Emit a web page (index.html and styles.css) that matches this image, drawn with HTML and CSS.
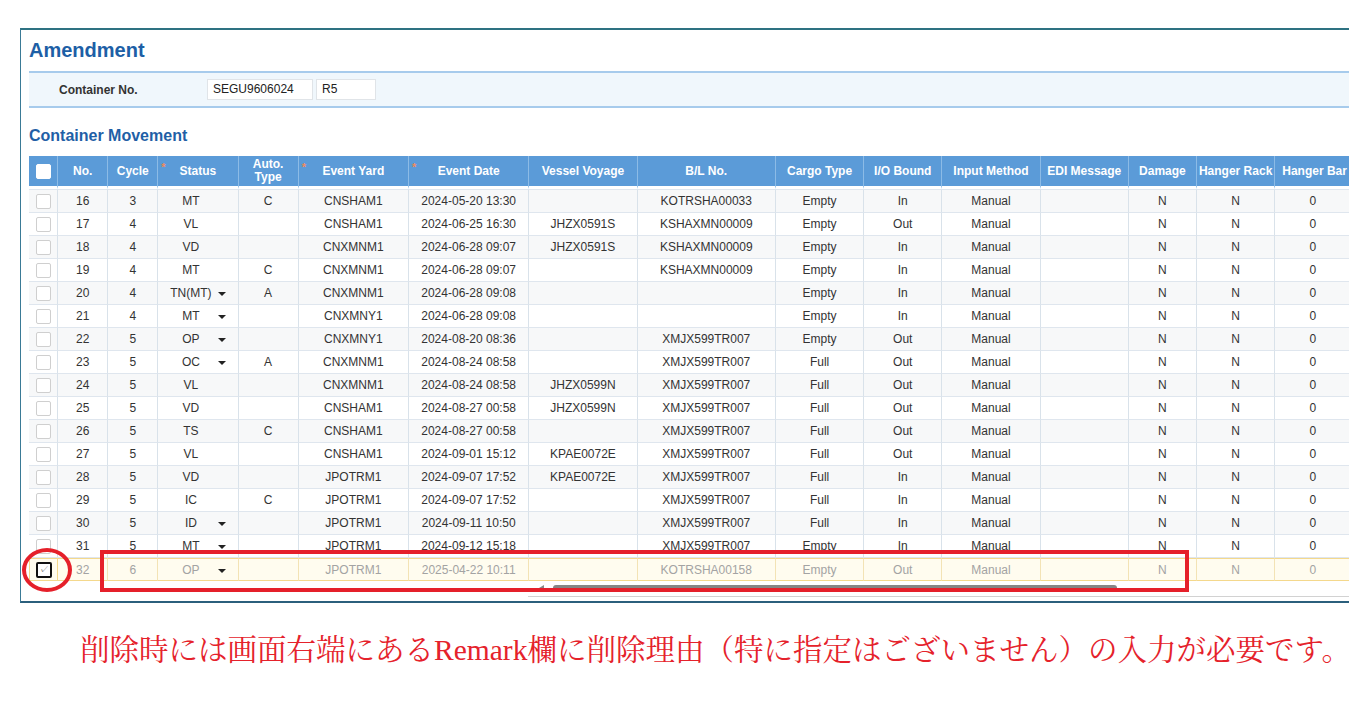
FILE: index.html
```html
<!DOCTYPE html>
<html lang="ja">
<head>
    <meta charset="UTF-8">
    <meta name="viewport" content="width=device-width, initial-scale=1.0">
    <title>Amendment</title>
    <link rel="stylesheet" href="styles.css">
</head>
<body>
    <div class="panel">
        <h1 class="title">Amendment</h1>
        <div class="search-band">
            <label class="search-label">Container No.</label>
            <span class="field field-no">SEGU9606024</span>
            <span class="field field-type">R5</span>
        </div>

        <h2 class="section">Container Movement</h2>

        <table class="grid">
            <colgroup>
                <col style="width:29px"><col style="width:50px"><col style="width:50px"><col style="width:80px">
                <col style="width:60px"><col style="width:110px"><col style="width:120px"><col style="width:108px">
                <col style="width:138px"><col style="width:88px"><col style="width:78px"><col style="width:98px">
                <col style="width:88px"><col style="width:68px"><col style="width:78px"><col style="width:76px">
                <col style="width:160px">
            </colgroup>
            <thead>
                <tr>
                    <th><span class="chk chk-head"></span></th>
                    <th>No.</th>
                    <th>Cycle</th>
                    <th class="req">Status</th>
                    <th class="two">Auto.<br>Type</th>
                    <th class="req">Event Yard</th>
                    <th class="req">Event Date</th>
                    <th>Vessel Voyage</th>
                    <th>B/L No.</th>
                    <th>Cargo Type</th>
                    <th>I/O Bound</th>
                    <th>Input Method</th>
                    <th>EDI Message</th>
                    <th>Damage</th>
                    <th>Hanger Rack</th>
                    <th class="last">Hanger Bar</th>
                    <th></th>
                </tr>
            </thead>
            <tbody>
                <tr class="alt"><td><span class="chk"></span></td><td>16</td><td>3</td><td class="status">MT</td><td>C</td><td>CNSHAM1</td><td>2024-05-20 13:30</td><td></td><td>KOTRSHA00033</td><td>Empty</td><td>In</td><td>Manual</td><td></td><td>N</td><td>N</td><td>0</td><td></td></tr>
                <tr><td><span class="chk"></span></td><td>17</td><td>4</td><td class="status">VL</td><td></td><td>CNSHAM1</td><td>2024-06-25 16:30</td><td>JHZX0591S</td><td>KSHAXMN00009</td><td>Empty</td><td>Out</td><td>Manual</td><td></td><td>N</td><td>N</td><td>0</td><td></td></tr>
                <tr class="alt"><td><span class="chk"></span></td><td>18</td><td>4</td><td class="status">VD</td><td></td><td>CNXMNM1</td><td>2024-06-28 09:07</td><td>JHZX0591S</td><td>KSHAXMN00009</td><td>Empty</td><td>In</td><td>Manual</td><td></td><td>N</td><td>N</td><td>0</td><td></td></tr>
                <tr><td><span class="chk"></span></td><td>19</td><td>4</td><td class="status">MT</td><td>C</td><td>CNXMNM1</td><td>2024-06-28 09:07</td><td></td><td>KSHAXMN00009</td><td>Empty</td><td>In</td><td>Manual</td><td></td><td>N</td><td>N</td><td>0</td><td></td></tr>
                <tr class="alt"><td><span class="chk"></span></td><td>20</td><td>4</td><td class="status">TN(MT)<span class="caret"></span></td><td>A</td><td>CNXMNM1</td><td>2024-06-28 09:08</td><td></td><td></td><td>Empty</td><td>In</td><td>Manual</td><td></td><td>N</td><td>N</td><td>0</td><td></td></tr>
                <tr><td><span class="chk"></span></td><td>21</td><td>4</td><td class="status">MT<span class="caret"></span></td><td></td><td>CNXMNY1</td><td>2024-06-28 09:08</td><td></td><td></td><td>Empty</td><td>In</td><td>Manual</td><td></td><td>N</td><td>N</td><td>0</td><td></td></tr>
                <tr class="alt"><td><span class="chk"></span></td><td>22</td><td>5</td><td class="status">OP<span class="caret"></span></td><td></td><td>CNXMNY1</td><td>2024-08-20 08:36</td><td></td><td>XMJX599TR007</td><td>Empty</td><td>Out</td><td>Manual</td><td></td><td>N</td><td>N</td><td>0</td><td></td></tr>
                <tr><td><span class="chk"></span></td><td>23</td><td>5</td><td class="status">OC<span class="caret"></span></td><td>A</td><td>CNXMNM1</td><td>2024-08-24 08:58</td><td></td><td>XMJX599TR007</td><td>Full</td><td>Out</td><td>Manual</td><td></td><td>N</td><td>N</td><td>0</td><td></td></tr>
                <tr class="alt"><td><span class="chk"></span></td><td>24</td><td>5</td><td class="status">VL</td><td></td><td>CNXMNM1</td><td>2024-08-24 08:58</td><td>JHZX0599N</td><td>XMJX599TR007</td><td>Full</td><td>Out</td><td>Manual</td><td></td><td>N</td><td>N</td><td>0</td><td></td></tr>
                <tr><td><span class="chk"></span></td><td>25</td><td>5</td><td class="status">VD</td><td></td><td>CNSHAM1</td><td>2024-08-27 00:58</td><td>JHZX0599N</td><td>XMJX599TR007</td><td>Full</td><td>Out</td><td>Manual</td><td></td><td>N</td><td>N</td><td>0</td><td></td></tr>
                <tr class="alt"><td><span class="chk"></span></td><td>26</td><td>5</td><td class="status">TS</td><td>C</td><td>CNSHAM1</td><td>2024-08-27 00:58</td><td></td><td>XMJX599TR007</td><td>Full</td><td>Out</td><td>Manual</td><td></td><td>N</td><td>N</td><td>0</td><td></td></tr>
                <tr><td><span class="chk"></span></td><td>27</td><td>5</td><td class="status">VL</td><td></td><td>CNSHAM1</td><td>2024-09-01 15:12</td><td>KPAE0072E</td><td>XMJX599TR007</td><td>Full</td><td>Out</td><td>Manual</td><td></td><td>N</td><td>N</td><td>0</td><td></td></tr>
                <tr class="alt"><td><span class="chk"></span></td><td>28</td><td>5</td><td class="status">VD</td><td></td><td>JPOTRM1</td><td>2024-09-07 17:52</td><td>KPAE0072E</td><td>XMJX599TR007</td><td>Full</td><td>In</td><td>Manual</td><td></td><td>N</td><td>N</td><td>0</td><td></td></tr>
                <tr><td><span class="chk"></span></td><td>29</td><td>5</td><td class="status">IC</td><td>C</td><td>JPOTRM1</td><td>2024-09-07 17:52</td><td></td><td>XMJX599TR007</td><td>Full</td><td>In</td><td>Manual</td><td></td><td>N</td><td>N</td><td>0</td><td></td></tr>
                <tr class="alt"><td><span class="chk"></span></td><td>30</td><td>5</td><td class="status">ID<span class="caret"></span></td><td></td><td>JPOTRM1</td><td>2024-09-11 10:50</td><td></td><td>XMJX599TR007</td><td>Full</td><td>In</td><td>Manual</td><td></td><td>N</td><td>N</td><td>0</td><td></td></tr>
                <tr><td><span class="chk"></span></td><td>31</td><td>5</td><td class="status">MT<span class="caret"></span></td><td></td><td>JPOTRM1</td><td>2024-09-12 15:18</td><td></td><td>XMJX599TR007</td><td>Empty</td><td>In</td><td>Manual</td><td></td><td>N</td><td>N</td><td>0</td><td></td></tr>
                <tr class="sel"><td><span class="chk chk-on">&#10003;</span></td><td>32</td><td>6</td><td class="status">OP<span class="caret"></span></td><td></td><td>JPOTRM1</td><td>2025-04-22 10:11</td><td></td><td>KOTRSHA00158</td><td>Empty</td><td>Out</td><td>Manual</td><td></td><td>N</td><td>N</td><td>0</td><td></td></tr>
            </tbody>
        </table>

        <div class="hscroll">
            <span class="arrow"></span>
            <div class="thumb"></div>
        </div>
    </div>

    <p class="note">削除時には画面右端にあるRemark欄に削除理由（特に指定はございません）の入力が必要です。</p>

    <!-- red marks from the manual -->
    <div class="mark-circle"></div>
    <div class="mark-box"></div>
</body>
</html>
```

FILE: styles.css
```css
* { margin: 0; padding: 0; box-sizing: border-box; }
html, body { overflow: hidden; }
body {
    font-family: 'Liberation Sans', Arial, sans-serif;
    font-size: 12px;
    color: #333;
    background: #fff;
    width: 1349px;
    height: 705px;
    position: relative;
}

.panel {
    margin: 28px 0 0 20px;
    width: 1520px;
    height: 575px;
    border-top: 2px solid #2e7282;
    border-left: 1px solid #3a7a96;
    border-bottom: 2px solid #2b5f7c;
}
.title {
    font-size: 20px;
    font-weight: bold;
    color: #1d5fa6;
    line-height: 41px;
    padding-left: 8px;
}
.search-band {
    margin-left: 8px;
    height: 37px;
    background: #f0f7fc;
    border-top: 2px solid #a7cbec;
    border-bottom: 2px solid #a7cbec;
    display: flex;
    align-items: center;
}
.search-label {
    font-weight: bold;
    font-size: 12px;
    color: #333;
    width: 178px;
    padding-left: 30px;
}
.field {
    height: 21px;
    line-height: 19px;
    background: #fff;
    border: 1px solid #e0e4e8;
    padding-left: 5px;
    font-size: 12px;
    color: #222;
}
.field-no { width: 106px; margin-right: 3px; }
.field-type { width: 60px; }

.section {
    font-size: 16px;
    font-weight: bold;
    color: #1f5fa6;
    line-height: 26px;
    padding: 15px 0 7px 8px;
}

.grid {
    margin-left: 8px;
    table-layout: fixed;
    border-collapse: separate;
    border-spacing: 0;
    width: 1483px;
}
.grid th {
    background: #5b9bd8;
    color: #fff;
    font-weight: bold;
    font-size: 12px;
    height: 33px;
    text-align: center;
    border-right: 1px solid #8cbbe6;
    border-bottom: 3px solid #fff;
    position: relative;
    line-height: 13px;
    white-space: nowrap;
}
.grid th.last { text-align: left; padding-left: 7px; }
.grid th.req::before {
    content: '*';
    position: absolute;
    left: 3px;
    top: 5px;
    color: #f08a5d;
    font-size: 11px;
}
.grid td {
    height: 23px;
    text-align: center;
    white-space: nowrap;
    border-right: 1px solid #d9e2ea;
    border-bottom: 1px solid #dfe6ee;
    color: #333;
    background: #fff;
}
.grid tbody tr:first-child td { border-top: 1px solid #dfe6ee; height: 24px; }
.grid tr.alt td { background: #f7f8f9; }
.grid td.status { position: relative; padding-right: 14px; }
.caret {
    position: absolute;
    right: 12px;
    top: 10px;
    border-top: 4px solid #222;
    border-left: 4px solid transparent;
    border-right: 4px solid transparent;
}

.grid tr.sel td {
    background: #fffcef;
    color: #a3a3a3;
    border-top: 1px solid #f4d88c;
    border-bottom: 1px solid #f4d88c;
    border-right-color: #f3e3b5;
    height: 23px;
}
.grid tr.sel td:first-child { border-left: 1px solid #f4d88c; border-right-color: #f4d88c; }

.chk {
    display: inline-block;
    width: 15px;
    height: 15px;
    border: 1px solid #cfcfcf;
    border-radius: 2px;
    background: #fff;
    vertical-align: middle;
}
.chk-head { border-color: #fff; }
.chk-on {
    width: 16px;
    height: 16px;
    border: 2px solid #111;
    color: #777;
    font-size: 10px;
    line-height: 12px;
    text-align: center;
}

.hscroll {
    margin-left: 507px;
    height: 16px;
    border-bottom: 1px solid #d2d2d2;
    display: flex;
    align-items: center;
    padding-bottom: 1px;
}
.arrow {
    width: 0;
    height: 0;
    margin: 0 9px 0 11px;
    border-right: 5px solid #888;
    border-top: 3px solid transparent;
    border-bottom: 3px solid transparent;
}
.thumb {
    width: 564px;
    height: 6px;
    background: #858585;
    border-radius: 3px;
}

.note {
    margin: 29px 0 0 80px;
    font-family: 'Liberation Serif', 'Noto Serif CJK JP', 'Noto Sans CJK JP', serif;
    font-size: 29.5px;
    line-height: 36px;
    color: #e5222b;
    white-space: nowrap;
}

.mark-circle {
    position: absolute;
    left: 22px;
    top: 548px;
    width: 50px;
    height: 44px;
    border: 4px solid #e5202a;
    border-radius: 50%;
}
.mark-box {
    position: absolute;
    left: 100px;
    top: 550px;
    width: 1089px;
    height: 42px;
    border: 4px solid #e5202a;
}
```
